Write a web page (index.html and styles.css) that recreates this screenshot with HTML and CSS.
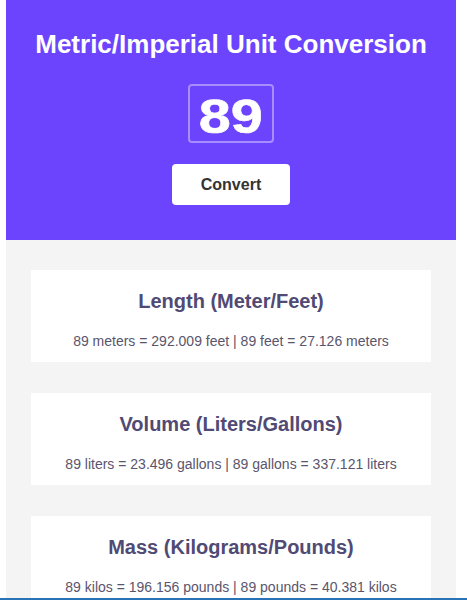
FILE: index.html
```html
<!DOCTYPE html>
<html lang="en">
<head>
<meta charset="utf-8">
<title>Metric/Imperial Unit Conversion</title>
<link rel="stylesheet" href="styles.css">
</head>
<body>
<div class="app">
  <header class="hero">
    <h1 class="title">Metric/Imperial Unit Conversion</h1>
    <div class="number-box"><span class="number">89</span></div>
    <button class="convert-btn" type="button">Convert</button>
  </header>
  <main class="results">
    <section class="card">
      <h2 class="card-title">Length (Meter/Feet)</h2>
      <p class="card-text">89 meters = 292.009 feet | 89 feet = 27.126 meters</p>
    </section>
    <section class="card">
      <h2 class="card-title">Volume (Liters/Gallons)</h2>
      <p class="card-text">89 liters = 23.496 gallons | 89 gallons = 337.121 liters</p>
    </section>
    <section class="card">
      <h2 class="card-title">Mass (Kilograms/Pounds)</h2>
      <p class="card-text">89 kilos = 196.156 pounds | 89 pounds = 40.381 kilos</p>
    </section>
  </main>
</div>
<div class="bottom-line"></div>
</body>
</html>
```

FILE: styles.css
```css
html, body {
  margin: 0;
  padding: 0;
  background: #ffffff;
}

body {
  font-family: "Liberation Sans", Arial, sans-serif;
}

.app {
  width: 450px;
  margin-left: 6px;
  background: #f4f4f4;
  min-height: 700px;
}

.hero {
  background: #6c44fe;
  display: flex;
  flex-direction: column;
  align-items: center;
  padding: 29px 0 35px;
}

.title {
  margin: 0;
  color: #ffffff;
  font-size: 26px;
  line-height: 30px;
  font-weight: 700;
}

.number-box {
  margin-top: 25px;
  box-sizing: border-box;
  width: 86px;
  height: 59px;
  border: 2px solid rgba(255, 255, 255, 0.4);
  border-radius: 4px;
  display: flex;
  align-items: center;
  justify-content: center;
  padding-top: 6px;
}

.number {
  display: inline-block;
  font-family: "Liberation Sans", Arial, sans-serif;
  font-weight: 700;
  font-size: 48px;
  line-height: 48px;
  color: #ffffff;
  transform: scaleX(1.2);
  -webkit-text-stroke: 0.6px #ffffff;
}

.convert-btn {
  margin-top: 21px;
  width: 118px;
  height: 41px;
  border: none;
  border-radius: 4px;
  background: #ffffff;
  color: #333333;
  font-family: "Liberation Sans", Arial, sans-serif;
  font-size: 16px;
  font-weight: 700;
  padding: 0;
}

.results {
  display: flex;
  flex-direction: column;
  gap: 31px;
  padding: 30px 25px;
}

.card {
  background: #ffffff;
  display: flex;
  flex-direction: column;
  align-items: center;
  gap: 20px;
  padding: 20px 10px 13px;
}

.card-title {
  margin: 0;
  font-size: 20px;
  line-height: 23px;
  font-weight: 700;
  color: #504a74;
}

.card-text {
  margin: 0;
  font-size: 14px;
  line-height: 16px;
  color: #5a556c;
}

.bottom-line {
  position: fixed;
  left: 0;
  right: 0;
  bottom: 0;
  height: 2px;
  background: #2a72b6;
}
```
